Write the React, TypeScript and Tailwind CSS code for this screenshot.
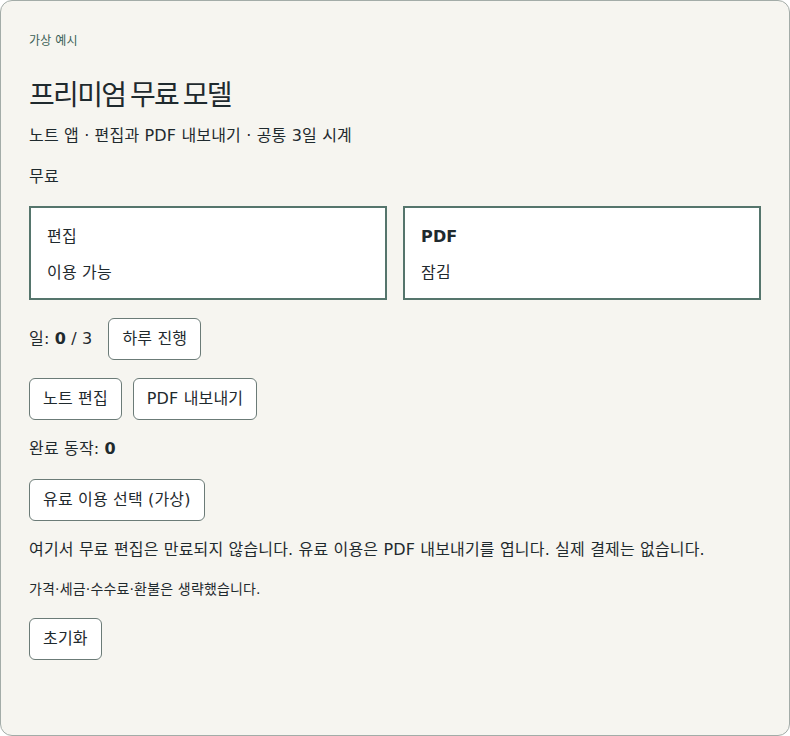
import React from "react";

export default function App() {
  const btn =
    "h-[42px] px-[13px] rounded-[6px] border border-[#6b7b77] bg-white text-[16px] text-[#1f2a2e] tracking-[0.01em]";
  return (
    <div className="w-[790px] h-[736px] font-['DejaVu_Sans','Noto_Sans_CJK_KR',sans-serif]">
      <div className="w-[790px] h-[736px] rounded-[12px] border border-[#a3aca8] bg-[#f6f5f0] px-[28px] pt-[30px] text-[#1f2a2e] tracking-[0.01em]">
        <div className="text-[12px] leading-[20px] text-[#3a5f56]">가상 예시</div>
        <h1 className="mt-[24px] text-[28px] leading-[36px] font-normal tracking-[-0.06em] font-['Noto_Sans_CJK_KR',sans-serif]">
          프리미엄 무료 모델
        </h1>
        <p className="mt-[13px] text-[16px] leading-[24px]">노트 앱 · 편집과 PDF 내보내기 · 공통 3일 시계</p>
        <p className="mt-[17px] text-[16px] leading-[24px]">무료</p>
        <div className="mt-[17px] grid grid-cols-2 gap-[16px]">
          <div className="h-[94px] border-2 border-[#55756c] bg-white px-[16px] pt-[17px]">
            <div className="text-[16px] leading-[24px]">편집</div>
            <div className="mt-[12px] text-[16px] leading-[24px]">이용 가능</div>
          </div>
          <div className="h-[94px] border-2 border-[#55756c] bg-white px-[16px] pt-[17px]">
            <div className="text-[16px] leading-[24px] font-bold">PDF</div>
            <div className="mt-[12px] text-[16px] leading-[24px]">잠김</div>
          </div>
        </div>
        <div className="mt-[18px] flex items-center gap-[16px]">
          <span className="text-[16px] leading-[24px]">
            일: <b>0</b> / 3
          </span>
          <button className={btn}>하루 진행</button>
        </div>
        <div className="mt-[18px] flex items-center gap-[11px]">
          <button className={btn}>노트 편집</button>
          <button className={btn}>PDF 내보내기</button>
        </div>
        <p className="mt-[17px] text-[16px] leading-[24px]">
          완료 동작: <b>0</b>
        </p>
        <div className="mt-[18px] flex">
          <button className={btn}>유료 이용 선택 (가상)</button>
        </div>
        <p className="mt-[17px] text-[16px] leading-[24px]">
          여기서 무료 편집은 만료되지 않습니다. 유료 이용은 PDF 내보내기를 엽니다. 실제 결제는 없습니다.
        </p>
        <p className="mt-[17px] text-[14px] leading-[20px]">가격·세금·수수료·환불은 생략했습니다.</p>
        <div className="mt-[19px] flex">
          <button className={btn}>초기화</button>
        </div>
      </div>
    </div>
  );
}
